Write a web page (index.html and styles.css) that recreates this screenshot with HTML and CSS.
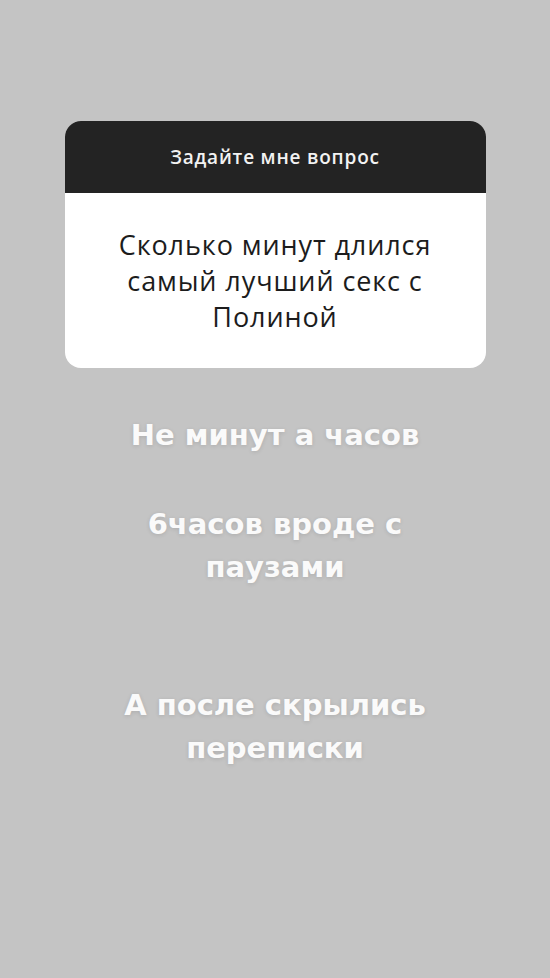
FILE: index.html
```html
<!DOCTYPE html>
<html lang="ru">
<head>
    <meta charset="UTF-8">
    <meta name="viewport" content="width=device-width, initial-scale=1.0">
    <title>Вопрос</title>
    <link rel="stylesheet" href="styles.css">
</head>
<body>
    <div class="story">
        <div class="question-card">
            <div class="question-header">Задайте мне вопрос</div>
            <div class="question-body">Сколько минут длился самый лучший секс с Полиной</div>
        </div>

        <p class="caption caption-first">Не минут а часов</p>
        <p class="caption caption-second">6часов вроде с<br>паузами</p>
        <p class="caption caption-third">А после скрылись<br>переписки</p>
    </div>
</body>
</html>
```

FILE: styles.css
```css
* {
    margin: 0;
    padding: 0;
    box-sizing: border-box;
}

body {
    background: #c4c4c4;
    font-family: 'Open Sans', 'Liberation Sans', sans-serif;
}

.story {
    width: 550px;
    height: 978px;
    display: flex;
    flex-direction: column;
    align-items: center;
    padding-top: 121px;
}

/* Question sticker */
.question-card {
    width: 421px;
    border-radius: 16px;
    overflow: hidden;
    background: #fff;
}

.question-header {
    height: 72px;
    background: #232323;
    color: #f2f2f2;
    font-size: 19px;
    font-weight: 600;
    letter-spacing: 0.8px;
    display: flex;
    align-items: center;
    justify-content: center;
}

.question-body {
    height: 175px;
    padding: 0 30px;
    display: flex;
    align-items: center;
    justify-content: center;
    text-align: center;
    color: #1c1c1c;
    font-size: 27px;
    letter-spacing: 0.9px;
    line-height: 36px;
}

/* White captions over the background */
.caption {
    font-family: 'DejaVu Sans', sans-serif;
    color: #fafafa;
    font-weight: bold;
    font-size: 29px;
    line-height: 43px;
    text-align: center;
    text-shadow: 0 1px 4px rgba(0, 0, 0, 0.12);
}

.caption-first {
    margin-top: 46px;
}

.caption-second {
    margin-top: 46px;
}

.caption-third {
    margin-top: 95px;
}
```
